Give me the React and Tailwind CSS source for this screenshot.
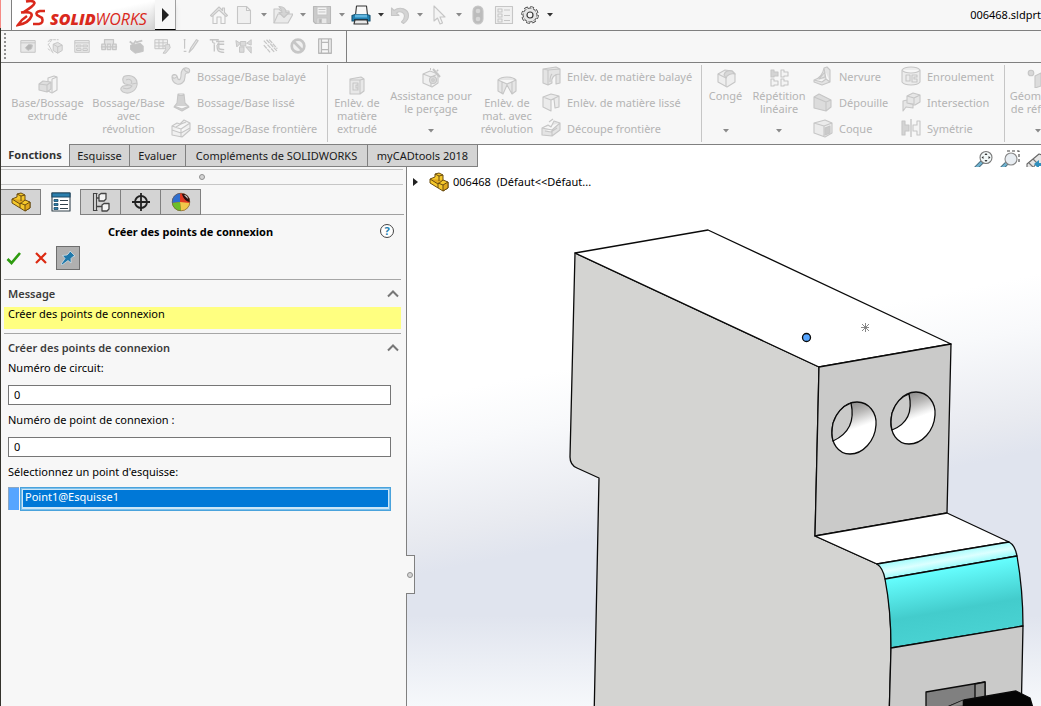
import React from "react";

/* ---------- Icons ---------- */

const Icon = ({ size = 20, children, className = "" }) => (
  <svg
    width={size}
    height={size}
    viewBox="0 0 20 20"
    fill="none"
    stroke="#c6c6c6"
    strokeWidth="1.1"
    strokeLinejoin="round"
    aria-hidden="true"
    className={`shrink-0 ${className}`}
  >
    {children}
  </svg>
);

const Caret = ({ color = "#8a8a8a" }) => (
  <svg width="6" height="4" viewBox="0 0 6 4" aria-hidden="true" className="shrink-0">
    <path d="M0 0h6L3 3.5z" fill={color} />
  </svg>
);

const icons = {
  home: (
    <>
      <path d="M1.500 10.500 10 2l3.500 3.500V3h2v4.500l3 3-1.500 1L10 5l-7 6.500z" fill="#ececec" />
      <path d="M4 11v7.500h4V12h4v6.500h4V11" />
    </>
  ),
  doc: <path d="M3.500 1.500h9l4 4v13h-13zM12.500 1.500v4h4" fill="#f0f0f0" />,
  open: (
    <>
      <path d="M1 18V4h5l2 2h8v4" fill="#ececec" />
      <path d="M1 18 5 9h15l-5 9z" fill="#e9e9e9" />
      <path d="M6 1.500c5 0 7 3 7 6h3l-5 5-5-5h3c0-3-1-4-3-6z" fill="#d4d4d4" />
    </>
  ),
  save: (
    <>
      <path d="M1.500 1.500h17v17h-15l-2-2z" fill="#cbcbcb" stroke="#b8b8b8" />
      <path d="M5 2h10v8H5z" fill="#f3f3f3" />
      <path d="M6.500 4.500h7M6.500 7h7" />
      <path d="M5 13h10v5.500H5z" fill="#e8e8e8" />
      <path d="M7 14h2.500v4H7z" fill="#b5b5b5" />
    </>
  ),
  print: (
    <>
      <path d="M5.500 1h10l1 9h-12z" fill="#f7f7f7" stroke="#333" />
      <path d="M1 10.500l3-1h12l3 1v5.500H1z" fill="#1f7fb0" stroke="#17506f" />
      <path d="M4 9.500h12v3H4z" fill="#5fb4de" stroke="none" />
      <path d="M3 14h14v2H3z" fill="#0f3f5d" stroke="none" />
      <path d="M4 15h12l1 4H3z" fill="#e8e8e8" stroke="#333" />
    </>
  ),
  undo: <path d="M1.500 3v7.500h7.500L6.500 8c4-3 8 0 8 3 0 2-1 4-3 6l2 1.500c3-2 5-5 5-8C18.500 4 10 1 4 5.500z" fill="#d4d4d4" />,
  cursor: <path d="M5 1v15l3.500-3 2.500 6 2.500-1-2.500-6H16z" fill="#f4f4f4" />,
  light: (
    <>
      <rect x="5" y="1" width="10" height="18" rx="5" fill="#bcbcbc" />
      <circle cx="10" cy="6" r="2.300" fill="#d6d6d6" stroke="none" />
      <circle cx="10" cy="14" r="2.300" fill="#d6d6d6" stroke="none" />
    </>
  ),
  props: (
    <>
      <path d="M1.500 1.500h17v17h-17z" fill="#f0f0f0" />
      <path d="M4 4h4v3H4zM4 9h4v3H4zM4 14h4v3H4zM10 5h6M10 10.500h6M10 15.500h6" />
    </>
  ),
  gear: (
    <>
      <circle cx="10" cy="10" r="7.600" stroke="#3b3b3b" strokeWidth="2.400" strokeDasharray="3.600 2.370" />
      <circle cx="10" cy="10" r="7" fill="#e6e6e6" stroke="#4a4a4a" strokeWidth="1" />
      <circle cx="10" cy="10" r="7.300" stroke="#ececec" strokeWidth="1.400" strokeDasharray="2.600 3.130" strokeDashoffset="-.5" />
      <circle cx="10" cy="10" r="3" fill="#f7f7f7" stroke="#3b3b3b" strokeWidth="1.200" />
    </>
  ),

  /* secondary toolbar */
  hand: (
    <>
      <path d="M2 4h16v13H2zM2 6.500h16" fill="#e8e8e8" />
      <path d="M7 12l4-4 4 1-1 4-4 2z" fill="#b5b5b5" />
    </>
  ),
  cube: (
    <>
      <path d="M2 5 7 3M2 9l4-5M4 3l10 0M2 13l4 3" strokeDasharray="3 1" />
      <path d="M8 8l5-2 5 3v6l-5 3-5-3zM8 8l5 3v7M13 11l5-2M3 9l5 9" fill="#e2e2e2" />
    </>
  ),
  table: <path d="M2 4h16v13H2zM2 6.500h16M4 9h5v2H4zM11 9h5v2h-5zM4 13h5v2H4zM11 13h5v2h-5z" fill="#ececec" />,
  chain: <path d="M1 11h18M2 8h4v6H2zM8 8h4v6H8zM14 8h4v6h-4zM5 8V3h10v5" fill="#d0d0d0" fillOpacity=".5" strokeWidth="1.400" />,
  block: (
    <>
      <path d="M4 9l11-2 3 3v6l-9 2-5-4z" fill="#c4c4c4" />
      <path d="M3 5l4 3 3-4M10 6l7-2" strokeWidth="2" />
    </>
  ),
  grid: (
    <>
      <path d="M1 3h14v10H1zM1 6.500h14M1 10h14M5.500 3v10M10 3v10" fill="#f0f0f0" />
      <path d="M12 9l5-1 1 4-5 6h-3l3-4z" fill="#ddd" />
    </>
  ),
  pencil: <path d="M3 3h2M4 3v10M3 16h3M9 17l2-5 6-9 2 1-6 9z" fill="#e6e6e6" strokeWidth="1.300" />,
  pipe: <path d="M2 3h10M5 3c0 3 0 4 3 4M9 5h9M10 8h8M7 8v8M10 9c0 6 1 8 8 8M12 6v6c0 2 2 2 6 2" strokeWidth="1.500" />,
  robot: <path d="M1 4l5 3-4 4zM6 5h6v5H6zM13 7l5-4v6zM5 11h5v6H5zM12 11l6 0v7z" fill="#dadada" />,
  slash: <path d="M2 4l12 13M5 3l12 13M8 3l9 10M2 9l7 8" strokeWidth="1.400" strokeDasharray="5 1" />,
  forbid: (
    <>
      <circle cx="10" cy="10" r="7" strokeWidth="3" fill="#f0f0f0" />
      <path d="M5 5l10 10" strokeWidth="3" />
    </>
  ),
  film: <path d="M3 2h14v16H3zM6 2v16M14 2v16M6 6h8M6 14h8" strokeWidth="1.500" stroke="#b8b8b8" />,

  /* ribbon */
  extrude: (
    <>
      <path d="M10 3l6-2 3 1v13l-5 3-4-2z" fill="#f4f4f4" />
      <path d="M14 4v13M14 4l5-2" />
      <path d="M1 9l4-3 8 1v7l-4 3-8-2zM1 9l8 1v7M9 10l4-3" fill="#dedede" />
    </>
  ),
  revolve: <path d="M6 1c8-2 13 3 12 9-1 6-8 10-14 7-3-2-3-4 0-6l7-1-5-1C3 7 3 2 6 1zM11 10l2 1c-2 3-6 3-9 2M7 5c4-2 7 1 5 4M18 8l-5 1" fill="#dedede" />,
  sweep: <path d="M1 11c0-3 4-3 5-1l1 3c2 2 3-1 3-4 0-4 2-8 6-7 4 1 3 5 0 5-2 0-2 2-2 4 0 5-4 8-8 7-3-1-5-4-5-7zM1 11c2 2 4 1 5-1M13 3c1 2 2 3 4 3" fill="#e2e2e2" />,
  loft: <path d="M7 2h6l1 9 4 4-7 4-8-4 3-4zM7 2c0 2 6 2 6 0M3 14l8 3 7-3" fill="#d2d2d2" />,
  boundary: <path d="M1 8l5-3 3 1 4-4 6 3v7l-8 7-10-2zM1 8l9 3 9-6M10 11v8M5 9l5-3 5-2M1 12l9 3 9-5" fill="#f0f0f0" />,
  cutExtrude: <path d="M3 4l11-2 3 2v12l-4 3H3zM3 5h10v14M13 5l4-1M6 8h5v7H6zM9 10h2v3H9z" fill="#e8e8e8" />,
  wizard: (
    <>
      <path d="M2 6l7-3 8 3v9l-6 4-9-4zM2 6l8 3v9M10 9l7-3" fill="#f0f0f0" />
      <circle cx="12" cy="12" r="3.500" fill="#dcdcdc" />
      <circle cx="12" cy="12" r="1.300" />
      <path d="M12 1l7 8M16 2l1 1M9 1l1 0" strokeWidth="2" />
    </>
  ),
  cutRevolve: <path d="M1 5c4-4 14-4 18 0v11l-4 3-5-9-4 9-5-3zM1 5l9 4 9-4M10 9v2M5 7v11M15 7v11" fill="#e6e6e6" />,
  cutSweep: <path d="M2 3l13-2 4 2v5c-6 0-9 4-8 9l-4 2-5-2zM2 3l5 1v15M7 4l12-1M11 8c-2 2-2 5-2 8M15 8v10l4-1V8" fill="#e4e4e4" />,
  cutLoft: <path d="M2 5l8-3 8 2v11l-4 1-1-9-3 1v11l-8-4zM2 5l8 3M10 8l8-4" fill="#ebebeb" />,
  cutBoundary: <path d="M1 10l6-3 3 2 3-6 6 2v7l-8 6-10-1zM1 10l10 2 8-7M11 12v6M4 13l6 1 6-4M8 4l4-3" fill="#e4e4e4" />,
  fillet: (
    <>
      <path d="M2 6l7-4 7 1 3 3v8l-8 5-9-5z" fill="#eeeeee" />
      <path d="M10 10c1-3 5-5 9-4l-3-3c-4-1-7 0-8 4z" fill="#d8d8d8" />
      <path d="M2 6l8 4v8" />
    </>
  ),
  pattern: (
    <>
      <path d="M2 2h3v2h4v4H5v1H2z" fill="#d4d4d4" />
      <path d="M12 2h3v2h4v4h-4v1h-3zM2 11h3v2h4v4H5v1H2zM12 11h3v2h4v4h-4v1h-3z" fill="#f4f4f4" />
    </>
  ),
  rib: <path d="M1 14c5-1 9-6 10-12l3-1 3 3v12l-8 3-8-3zM11 2l2 11 4 3M1 14l8 2 4-3M6 13l6-7v5z" fill="#e4e4e4" />,
  draft: <path d="M1 5l5-3 12 6v7l-5 4-12-3zM1 5l12 5v9M13 10l5-2" fill="#dcdcdc" />,
  shell: (
    <>
      <path d="M1 5l11-3 7 3v10l-7 4-11-4zM1 5l10 3v11M11 8l8-3" fill="#ebebeb" />
      <path d="M12 10l5-2v7l-5 2z" fill="#cacaca" />
    </>
  ),
  wrap: <path d="M1 4c3-4 15-4 18 0v12c-3 4-15 4-18 0zM1 4c3 4 15 4 18 0M5 9h4v6H5zM11 9h5v2h-3v2h3v3h-5z" fill="#ececec" />,
  intersect: <path d="M6 4l6-3 7 2v7l-5 3-8-2zM6 4l7 2v6M13 6l6-3M2 9l4-1v3l6 1v4l-7-1-3 4z" fill="#e6e6e6" />,
  mirror: (
    <>
      <path d="M1 3h3v4h4v6H4v4H1z" fill="#d4d4d4" />
      <path d="M19 3h-3v4h-4v6h4v4h3z" fill="#f4f4f4" />
      <path d="M10 1v18" strokeWidth="1.400" />
    </>
  ),
  refGeo: (
    <>
      <circle cx="10" cy="5" r="2.800" fill="#d8d8d8" />
      <path d="M14 8l6-3v13l-6 2z" fill="#dcdcdc" />
    </>
  ),
};

const PartIcon = () => (
  <Icon>
    <g stroke="#6b4d10" strokeWidth="1">
      <path d="M1 7l5-2V2l4-1 4 2v5l5 2v6l-5 3L1 11z" fill="#f5c82a" />
      <path d="M1 7l8 5 5-4M9 12v4M14 13l5-3v6l-5 3zM9 11l5 2" fill="#e0a81c" />
      <path d="M6 2l4 2v5M10 4l4-1" fill="none" />
    </g>
  </Icon>
);

/* ---------- Title bar ---------- */

const quickTools = [
  { icon: "doc", label: "Nouveau" },
  { icon: "open", label: "Ouvrir" },
  { icon: "save", label: "Enregistrer" },
  { icon: "print", label: "Imprimer", active: true },
  { icon: "undo", label: "Annuler" },
  { icon: "cursor", label: "Sélectionner" },
];

const TitleBar = () => (
  <header className="flex h-[31px] shrink-0 items-center overflow-hidden border-b border-[#808080] bg-[#f7f7f7]">
    <div className="ml-[10px] flex h-full w-[144px] shrink-0 items-center gap-[4px] border-l border-[#808080] bg-linear-to-br from-white via-white to-[#d4d4d4] pl-1">
      <svg width="30" height="30" viewBox="0 0 30 30" fill="none" stroke="#da291c" strokeWidth="2.600" aria-hidden="true" className="shrink-0">
        <path d="M10 1.500Q18 0 18.500 3 18 6 7 12.500" />
        <path d="M5 12.500Q17 11 15.500 16 13 23 2 25 6 19 11 16" />
        <path d="M29 11h-5q-5 1-3 4l5 3q2 5-3 6h-6" />
      </svg>
      <span className="mt-2 whitespace-nowrap font-['Open_Sans',sans-serif] text-[16px] leading-5 text-[#da291c] italic">
        <b className="font-extrabold">SOLID</b>WORKS
      </span>
    </div>
    <button aria-label="Menu" className="flex h-full w-[21px] shrink-0 items-center justify-center border-r border-b border-[#a0a0a0] border-b-black bg-[#f7f7f7] shadow-md">
      <svg width="7" height="14" viewBox="0 0 7 14" aria-hidden="true">
        <path d="M0 0l7 7-7 7z" fill="#222" />
      </svg>
    </button>
    <div className="ml-[30px] flex shrink-0 items-center">
      <button aria-label="Accueil" className="flex w-[25px] justify-center">
        <Icon>{icons.home}</Icon>
      </button>
      {quickTools.map((t) => (
        <div key={t.icon} className="flex items-center">
          <button aria-label={t.label} className="flex w-[26px] justify-center">
            <Icon>{icons[t.icon]}</Icon>
          </button>
          <button aria-label={`${t.label} : options`} className="flex w-[13px] justify-center">
            <Caret color={t.active ? "#333" : "#8a8a8a"} />
          </button>
        </div>
      ))}
      <button aria-label="Reconstruire" className="flex w-[26px] justify-center">
        <Icon>{icons.light}</Icon>
      </button>
      <button aria-label="Propriétés" className="flex w-[26px] justify-center">
        <Icon>{icons.props}</Icon>
      </button>
      <button aria-label="Options" className="flex w-[26px] justify-center">
        <Icon>{icons.gear}</Icon>
      </button>
      <button aria-label="Liste des options" className="flex w-[13px] justify-center">
        <Caret color="#333" />
      </button>
    </div>
    <span className="ml-auto whitespace-nowrap text-[11px]">006468.sldprt</span>
  </header>
);

/* ---------- Secondary toolbar ---------- */

const routeTools = ["hand", "cube", "table", "chain", "block", "grid", "pencil", "pipe", "robot", "slash", "forbid", "film"];

const RouteToolbar = () => (
  <div className="flex h-8 shrink-0 border-b border-[#808080] bg-[#f7f7f7]">
    <div className="flex items-center border-r border-[#808080] pr-[8px] pb-px pl-[3px]">
      <div className="mr-2 h-[26px] w-[2px] bg-[repeating-linear-gradient(#909090_0_2px,transparent_2px_4px)]" />
      {routeTools.map((name) => (
        <button key={name} aria-label={name} className="flex w-[27px] justify-center">
          <Icon size={18}>{icons[name]}</Icon>
        </button>
      ))}
    </div>
  </div>
);

/* ---------- Ribbon ---------- */

const BigTool = ({ icon, lines, className, menu }) => (
  <button className={`flex shrink-0 flex-col ${menu ? "pt-[5px]" : "pt-[12px]"} ${className}`}>
    <Icon>{icons[icon]}</Icon>
    <span className={menu ? "mt-px h-[40px]" : "mt-px"}>
      {lines.map((line) => (
        <span key={line} className="block whitespace-nowrap">
          {line}
        </span>
      ))}
    </span>
    {menu && <Caret />}
  </button>
);

const ToolList = ({ items, className }) => (
  <div className={`flex shrink-0 flex-col ${className}`}>
    {items.map(([icon, label]) => (
      <button key={label} className="flex h-[26px] items-center gap-[6px] whitespace-nowrap">
        <Icon>{icons[icon]}</Icon>
        {label}
      </button>
    ))}
  </div>
);

const Divider = () => <div className="my-[2px] w-px shrink-0 bg-[#c6c6c6]" />;

const Ribbon = () => (
  <div className="flex h-[82px] shrink-0 overflow-hidden border-b border-[#808080] bg-[#f7f7f7] text-center text-[11px] leading-[13px] text-[#b4b4b4]">
    <div className="flex w-[326px] shrink-0">
      <BigTool icon="extrude" lines={["Base/Bossage", "extrudé"]} className="ml-[6px] w-[81px] items-center" />
      <BigTool icon="revolve" lines={["Bossage/Base", "avec", "révolution"]} className="w-[81px] items-center" />
      <ToolList
        className="ml-[2px]"
        items={[
          ["sweep", "Bossage/Base balayé"],
          ["loft", "Bossage/Base lissé"],
          ["boundary", "Bossage/Base frontière"],
        ]}
      />
    </div>
    <Divider />
    <div className="flex w-[373px] shrink-0">
      <BigTool icon="cutExtrude" lines={["Enlèv. de", "matière", "extrudé"]} className="w-[58px] items-center" />
      <BigTool icon="wizard" lines={["Assistance pour", "le perçage"]} className="w-[90px] items-center" menu />
      <BigTool icon="cutRevolve" lines={["Enlèv. de", "mat. avec", "révolution"]} className="w-[62px] items-center" />
      <ToolList
        className="ml-[3px]"
        items={[
          ["cutSweep", "Enlèv. de matière balayé"],
          ["cutLoft", "Enlèv. de matière lissé"],
          ["cutBoundary", "Découpe frontière"],
        ]}
      />
    </div>
    <Divider />
    <div className="flex w-[302px] shrink-0">
      <BigTool icon="fillet" lines={["Congé"]} className="w-[47px] items-center" menu />
      <BigTool icon="pattern" lines={["Répétition", "linéaire"]} className="w-[60px] items-center" menu />
      <ToolList
        className="ml-[4px] w-[88px]"
        items={[
          ["rib", "Nervure"],
          ["draft", "Dépouille"],
          ["shell", "Coque"],
        ]}
      />
      <ToolList
        items={[
          ["wrap", "Enroulement"],
          ["intersect", "Intersection"],
          ["mirror", "Symétrie"],
        ]}
      />
    </div>
    <Divider />
    <BigTool icon="refGeo" lines={["Géom", "de réf"]} className="w-[36px] items-end text-right" menu />
  </div>
);

/* ---------- Tabs + heads-up toolbar ---------- */

const tabs = [
  ["Fonctions", "w-[69px]"],
  ["Esquisse", "w-[60px]"],
  ["Evaluer", "w-[56px]"],
  ["Compléments de SOLIDWORKS", "w-[182px]"],
  ["myCADtools 2018", "w-[110px]"],
];

const TabBar = () => (
  <div className="flex h-[22px] shrink-0 bg-white text-[11px] text-[#1a1a1a]">
    {tabs.map(([label, width], i) => (
      <button
        key={label}
        className={`shrink-0 border-r border-b border-[#808080] pt-px whitespace-nowrap ${width} ${
          i === 0 ? "-mt-px bg-[#f7f7f7] font-bold text-[#333]" : "bg-[#d4d4d4]"
        }`}
      >
        {label}
      </button>
    ))}
    <div className="ml-auto flex w-[67px] shrink-0 gap-[6px] overflow-x-clip pt-[5px]">
      <Icon>
        <path d="M8 12l-6 6" stroke="#4a6b7a" strokeWidth="4" strokeLinecap="round" />
        <path d="M8 12l-6 6" stroke="#6fb4d2" strokeWidth="2.400" strokeLinecap="round" />
        <circle cx="12" cy="7.500" r="6" fill="#f2f8f8" stroke="#7a7a7a" />
        <path d="M12 3l1.500 2h-3zM12 12l1.500-2h-3zM7.500 7.500l2-1.500v3zM16.500 7.500l-2-1.500v3z" fill="#333" stroke="none" />
      </Icon>
      <Icon>
        <path d="M7 1h12v13" stroke="#444" strokeDasharray="3 2" />
        <path d="M6 14l-4 4" stroke="#4a6b7a" strokeWidth="4" strokeLinecap="round" />
        <path d="M6 14l-4 4" stroke="#6fb4d2" strokeWidth="2.400" strokeLinecap="round" />
        <circle cx="11" cy="9" r="6" fill="#e8edf2" stroke="#888" />
      </Icon>
      <Icon>
        <path d="M1 14L13 4l6 2v10l-9-2-4 5-5-1z" fill="#e6e6e6" stroke="#666" />
        <path d="M3 13l4 4M7 9l5 5" stroke="#777" />
        <path d="M8 14l5-4v3h5v3h-5v3z" fill="#2f8fbd" stroke="none" />
      </Icon>
    </div>
  </div>
);

/* ---------- Property manager ---------- */

const Chevron = () => (
  <svg width="12" height="8" viewBox="0 0 12 8" fill="none" stroke="#777" strokeWidth="2" aria-hidden="true">
    <path d="M1 6.500l5-5 5 5" />
  </svg>
);

const SectionTitle = ({ children }) => (
  <button className="flex h-[20px] w-full items-center justify-between pr-[2px] pl-1 font-semibold text-[#3c3c3c]">
    {children}
    <Chevron />
  </button>
);

const managerTabs = [
  { label: "Arbre", icon: <PartIcon /> },
  {
    label: "Propriétés",
    icon: (
      <Icon>
        <path d="M1 1h18v18H1z" fill="#fff" stroke="#33434d" />
        <path d="M1 1h18v4H1z" fill="#2b7fae" stroke="#1c4a66" />
        <path d="M3 7.500h4v2H3zM3 11.500h4v2H3zM3 15.500h4v2H3z" fill="#2b7fae" stroke="#1c4a66" strokeWidth=".8" />
        <path d="M9 8.500h8M9 12.500h8M9 16.500h8" stroke="#33434d" />
      </Icon>
    ),
  },
  {
    label: "Configurations",
    icon: (
      <Icon>
        <path d="M2.500 1.500h4M2.500 18.500h4M2.500 1v18M5.500 1v18" stroke="#444" />
        <path d="M8 3l2-1.500h5V7l-2 2H8zM11 13l2-1.500h5V17l-2 2h-5zM5.500 6h2.500M5.500 14.500H11" fill="#f4f4f4" stroke="#444" strokeWidth="1.300" />
      </Icon>
    ),
  },
  {
    label: "Cotes",
    icon: (
      <Icon>
        <circle cx="10" cy="10" r="6" stroke="#222" strokeWidth="1.800" />
        <path d="M10 1v18M1 10h18" stroke="#222" strokeWidth="1.800" />
      </Icon>
    ),
  },
  {
    label: "Apparences",
    icon: (
      <Icon>
        <circle cx="10" cy="10" r="9" fill="#e03a24" stroke="none" />
        <path d="M9 10 1 11A9 9 0 0 1 9 1z" fill="#2f6fd0" stroke="none" />
        <path d="M9 10l10 1a9 9 0 0 1-9 8z" fill="#f2c84a" stroke="none" />
        <path d="M9 10l1 9a9 9 0 0 1-9-8z" fill="#6cbf2a" stroke="none" />
        <path d="M11 2c4-1 8 3 8 8-4 0-7-4-8-8z" fill="#2b1010" stroke="none" />
        <path d="M13 3c2 0 4 2 4 4z" fill="#e9e9e9" stroke="none" />
        <circle cx="10" cy="10" r="8.800" stroke="#6b5a3a" strokeWidth=".6" />
      </Icon>
    ),
  },
];

const fieldClass =
  "mt-[10px] mb-[8px] block h-[20px] w-full border border-[#767676] bg-white px-[5px] pb-[2px] text-[11px] text-black outline-none";

const PropertyPanel = () => (
  <aside className="flex w-[406px] shrink-0 flex-col border-r border-[#808080] bg-[#f7f7f7] text-[11px] leading-[14px] text-black">
    <div className="mt-[2px] mr-[3px] flex h-4 shrink-0 items-center justify-center border-y border-[#c6c6c6]">
      <span className="size-[6px] rounded-full border border-[#909090] bg-[#d4d4d4]" />
    </div>

    <div className="mt-[4px] mr-[2px] flex h-[26px] shrink-0">
      {managerTabs.map((t, i) => (
        <button
          key={t.label}
          aria-label={t.label}
          className={`flex w-[40px] items-center justify-center border-r border-[#808080] ${
            i === 1 ? "bg-[#f7f7f7]" : "border-y bg-[#d4d4d4]"
          }`}
        >
          {t.icon}
        </button>
      ))}
      <div className="flex-1 border-b border-[#a0a0a0]" />
    </div>

    <div className="flex h-[31px] shrink-0 items-center pt-px pr-[12px]">
      <h1 className="flex-1 pt-px text-center font-bold">Créer des points de connexion</h1>
      <button aria-label="Aide" className="flex size-[14px] items-center justify-center rounded-full border border-[#444] bg-white font-bold text-[#1f7fb0]">
        ?
      </button>
    </div>

    <div className="flex h-6 shrink-0 items-center pl-[5px]">
      <button aria-label="OK" className="w-[16px]">
        <svg width="16" height="14" viewBox="0 0 16 14" fill="none" stroke="#2e9b0f" strokeWidth="2.600" aria-hidden="true">
          <path d="M1.500 8l4 4 8.500-10" />
        </svg>
      </button>
      <button aria-label="Annuler" className="ml-[13px] w-[12px]">
        <svg width="12" height="12" viewBox="0 0 12 12" fill="none" stroke="#dc2a12" strokeWidth="2.200" aria-hidden="true">
          <path d="M1 1l10 10M11 1L1 11" />
        </svg>
      </button>
      <button aria-label="Épingler" className="ml-[9px] flex size-6 items-center justify-center border border-[#6e6e6e] bg-[#b0b0b0]">
        <svg width="14" height="14" viewBox="0 0 14 14" aria-hidden="true">
          <path d="M9 0l5 5-2 .5-2 2v4.500l-3-2.500L1 14l-.8-1L4 7.500 1.500 4.500l4.500-.5 2-2z" fill="#1f78aa" stroke="#dbe8ee" strokeWidth=".7" />
        </svg>
      </button>
    </div>

    <section className="mt-[9px] mr-[5px] ml-[3px] border-t border-[#a6a6a6] pt-[4px]">
      <SectionTitle>Message</SectionTitle>
      <p className="mt-[3px] h-[22px] bg-[#ffff80] pl-1">Créer des points de connexion</p>
    </section>

    <section className="mt-[4px] mr-[5px] ml-[3px] border-t border-[#a6a6a6] pt-[4px]">
      <SectionTitle>Créer des points de connexion</SectionTitle>
      <div className="pt-[3px] pr-[10px] pl-1">
        <label htmlFor="circuit" className="block">
          Numéro de circuit:
        </label>
        <input id="circuit" type="text" defaultValue="0" className={fieldClass} />
        <label htmlFor="connexion" className="block">
          Numéro de point de connexion :
        </label>
        <input id="connexion" type="text" defaultValue="0" className={fieldClass} />
        <span id="sketch-point" className="block">
          Sélectionnez un point d'esquisse:
        </span>
        <div className="mt-2 flex h-6 items-start gap-px">
          <div className="h-[23px] w-[11px] border-t border-l border-[#8aa7c4] bg-[#56a5ff]" />
          <ul role="listbox" aria-labelledby="sketch-point" className="h-6 flex-1 border border-[#4aa3dc] bg-[#cde6f7] p-[2px] ring-1 ring-[#7cbfea] ring-inset">
            <li role="option" aria-selected="true" className="h-[17px] bg-[#0078d7] pl-[2px] leading-[14px] text-white">
              Point1@Esquisse1
            </li>
          </ul>
        </div>
      </div>
    </section>
  </aside>
);

/* ---------- 3D view ---------- */

const Scene = () => (
  <svg
    viewBox="407 167 634 539"
    preserveAspectRatio="xMinYMin slice"
    className="absolute inset-0 h-full w-full"
    stroke="#0a0a0a"
    strokeWidth="1.300"
    strokeLinejoin="round"
    role="img"
    aria-label="Modèle 3D 006468"
  >
    <defs>
      <linearGradient id="sky" gradientUnits="userSpaceOnUse" x1="407" y1="400" x2="441" y2="570">
        <stop offset="0" stopColor="#ffffff" />
        <stop offset=".3" stopColor="#f8f9fb" />
        <stop offset=".8" stopColor="#e8eaf0" />
        <stop offset="1" stopColor="#e0e4ee" />
      </linearGradient>
      <linearGradient id="ground" gradientUnits="userSpaceOnUse" x1="0" y1="615" x2="0" y2="715">
        <stop offset="0" stopColor="#f8fafc" stopOpacity="0" />
        <stop offset="1" stopColor="#f8fafc" />
      </linearGradient>
      <linearGradient id="hole" x1=".35" y1="0" x2=".65" y2="1">
        <stop offset="0" stopColor="#858483" />
        <stop offset=".25" stopColor="#b9b8b7" />
        <stop offset=".45" stopColor="#efefef" />
        <stop offset=".52" stopColor="#ffffff" />
      </linearGradient>
      <linearGradient id="lip" gradientUnits="userSpaceOnUse" x1="940" y1="550" x2="944" y2="572">
        <stop offset="0" stopColor="#8ffafa" />
        <stop offset=".5" stopColor="#dcffff" />
        <stop offset="1" stopColor="#7dfafa" />
      </linearGradient>
      <linearGradient id="cyan" gradientUnits="userSpaceOnUse" x1="945" y1="568" x2="957" y2="638">
        <stop offset="0" stopColor="#66ffff" />
        <stop offset=".6" stopColor="#43cccc" />
        <stop offset="1" stopColor="#49d2d2" />
      </linearGradient>
    </defs>

    <g stroke="none">
      <rect x="407" y="167" width="1400" height="1200" fill="url(#sky)" />
      <rect x="407" y="615" width="1400" height="800" fill="url(#ground)" />
    </g>

    {/* side */}
    <path
      d="M575 253 819 367 815 536 877 564Q884 567 886 578Q891 610 891 648L889 720H594L599 478 577 468Q570 465 570 457Z"
      fill="#d4d4d2"
    />
    {/* top */}
    <path d="M575 253 708 230 951 344 819 367z" fill="#fff" />
    {/* upper front */}
    <path d="M819 367 951 344 947 513 815 536z" fill="#cacac9" />
    {/* step */}
    <path d="M815 536 947 513 1009 542 877 564z" fill="#fff" />
    {/* cover */}
    <path d="M877 564 1009 542Q1015 545 1017 556L885 579Q883 568 877 564z" fill="url(#lip)" />
    <path d="M885 579 1017 556Q1023 590 1023 626L891 648Q891 610 885 579z" fill="url(#cyan)" />
    <path d="M891 648 1023 626 1021 720H889z" fill="#cacac9" />

    {/* lever */}
    <path d="M926 720V692L985 682V720z" fill="#808080" />
    <path d="M975 684 985 682V700H975z" fill="#8e8e8c" />
    <path d="M945 708 964 700 1016 691 1030 698 1033 708 1030 720H945z" fill="#050505" />
    <path d="M947 707 963 700V706z" fill="#8a8a88" strokeWidth=".6" />

    {/* terminal holes */}
    <path d="M857 402C869 402 877 413 876 425C875 441 863 454 850 454C838 454 831 443 832 430C833 415 844 402 857 402z" fill="url(#hole)" />
    <path d="M851 403Q838 408 833 423Q831 433 833 441Q857 430 851 403z" fill="#cacac9" />
    <path d="M916 392C928 392 936 403 935 415C934 431 922 444 909 444C897 444 890 433 891 420C892 405 903 392 916 392z" fill="url(#hole)" />
    <path d="M909 394Q897 398 892 413Q890 423 892 430Q915 421 909 394z" fill="#cacac9" />

    {/* sketch points */}
    <circle cx="806.500" cy="337.500" r="4" fill="#56a5ff" />
    <path d="M861 327.500h8M865.500 323v9M862 324l7 7M869 324l-7 7" stroke="#7a7a7a" strokeWidth=".9" />
  </svg>
);

const Viewport = () => (
  <main className="relative min-w-0 flex-1">
    <Scene />
    <div className="absolute top-[5px] left-[6px] flex h-5 items-center text-[11px] text-black">
      <svg width="5" height="8" viewBox="0 0 5 8" aria-hidden="true">
        <path d="M0 0l5 4-5 4z" fill="#222" />
      </svg>
      <span className="mr-[4px] ml-[11px]">
        <PartIcon />
      </span>
      <span className="whitespace-pre">006468  (Défaut&lt;&lt;Défaut...</span>
    </div>
    <button aria-label="Réduire le panneau" className="absolute top-[388px] -left-px flex h-[39px] w-[9px] items-center justify-center border border-l-0 border-[#808080] bg-[#f7f7f7]">
      <span className="size-[6px] rounded-full border border-[#909090] bg-[#d4d4d4]" />
    </button>
  </main>
);

export default function App() {
  return (
    <div className="flex h-screen overflow-hidden bg-[#f7f7f7] font-['Noto_Sans','Open_Sans',sans-serif]">
      <div className="flex w-px shrink-0 flex-col">
        <div className="h-7 bg-[#f58a85]" />
        <div className="flex-1 bg-[#34332c]" />
      </div>
      <div className="flex min-w-0 flex-1 flex-col">
        <TitleBar />
        <RouteToolbar />
        <Ribbon />
        <TabBar />
        <div className="flex min-h-0 flex-1">
          <PropertyPanel />
          <Viewport />
        </div>
      </div>
    </div>
  );
}
